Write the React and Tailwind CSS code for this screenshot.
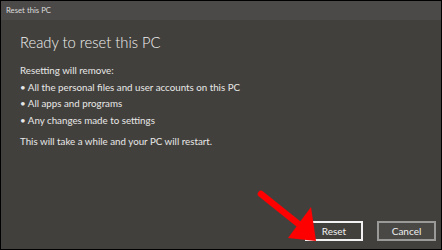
export default function App() {
  const font = { fontFamily: 'Lato, "Noto Sans", sans-serif' };
  return (
    <div
      className="relative w-[442px] h-[250px] border border-black bg-[#42403c] flex flex-col text-[#e8e8e8] overflow-hidden"
      style={font}
    >
      {/* Title bar */}
      <div className="h-[19px] bg-[#4b4a48] flex items-center px-[5px] text-[7.75px] leading-none text-[#dcdcdc]">
        Reset this PC
      </div>

      {/* Body */}
      <div className="flex-1 flex flex-col pl-[19px] pr-[5px]">
        <h1 className="mt-[12px] text-[14.75px] font-light leading-[20px] text-[#f0f0f0]">
          Ready to reset this PC
        </h1>
        <div className="mt-[10px] text-[9.75px] leading-[16.5px]">
          <p>Resetting will remove:</p>
          <ul>
            <li>• All the personal files and user accounts on this PC</li>
            <li>• All apps and programs</li>
            <li>• Any changes made to settings</li>
          </ul>
          <p className="mt-[5px]">This will take a while and your PC will restart.</p>
        </div>

        <div className="mt-auto mb-[8px] flex justify-end gap-[14px]">
          <button className="w-[58px] h-[20px] border-2 border-[#f2f2f2] bg-[#42403c] text-[10px] leading-none text-[#f0f0f0]">
            Reset
          </button>
          <button className="w-[59px] h-[20px] border-2 border-[#9a9a98] bg-[#4a4845] text-[10px] leading-none text-[#f0f0f0]">
            Cancel
          </button>
        </div>
      </div>

      {/* Red annotation arrow */}
      <svg
        className="absolute left-0 top-0 pointer-events-none"
        width="442"
        height="250"
        viewBox="0 0 442 250"
      >
        <line x1="260" y1="193" x2="300" y2="225" stroke="#ff0000" strokeWidth="6.5" strokeLinecap="round" />
        <polygon points="310,206 287,237 315,240" fill="#ff0000" />
      </svg>
    </div>
  );
}
